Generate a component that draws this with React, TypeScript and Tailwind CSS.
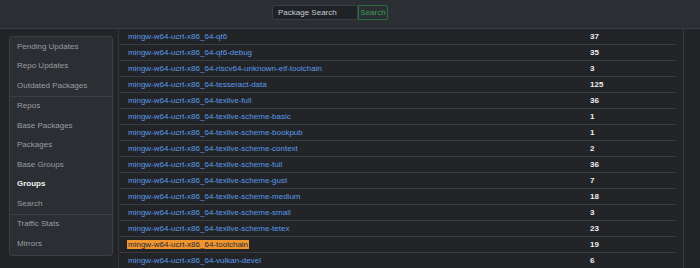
const groups = [
  ['Pending Updates', 'Repo Updates', 'Outdated Packages'],
  ['Repos', 'Base Packages', 'Packages', 'Base Groups', 'Groups', 'Search'],
  ['Traffic Stats', 'Mirrors'],
]

const rows: [string, number][] = [
  ['mingw-w64-ucrt-x86_64-qt6', 37],
  ['mingw-w64-ucrt-x86_64-qt6-debug', 35],
  ['mingw-w64-ucrt-x86_64-riscv64-unknown-elf-toolchain', 3],
  ['mingw-w64-ucrt-x86_64-tesseract-data', 125],
  ['mingw-w64-ucrt-x86_64-texlive-full', 36],
  ['mingw-w64-ucrt-x86_64-texlive-scheme-basic', 1],
  ['mingw-w64-ucrt-x86_64-texlive-scheme-bookpub', 1],
  ['mingw-w64-ucrt-x86_64-texlive-scheme-context', 2],
  ['mingw-w64-ucrt-x86_64-texlive-scheme-full', 36],
  ['mingw-w64-ucrt-x86_64-texlive-scheme-gust', 7],
  ['mingw-w64-ucrt-x86_64-texlive-scheme-medium', 18],
  ['mingw-w64-ucrt-x86_64-texlive-scheme-small', 3],
  ['mingw-w64-ucrt-x86_64-texlive-scheme-tetex', 23],
  ['mingw-w64-ucrt-x86_64-toolchain', 19],
  ['mingw-w64-ucrt-x86_64-vulkan-devel', 6],
]

export default function App() {
  return (
    <div className="w-[700px] h-[268px] overflow-hidden bg-[#222428] text-[8px] font-['Liberation_Sans',Arial,sans-serif]">
      <header className="h-[29px] bg-[#2b2e32] border-b border-[#3a3d42] flex justify-center items-start pt-[5px]">
        <div className="flex h-[15px] mr-[40px]">
          <div className="w-[86px] bg-[#1f2226] border border-[#3a3d42] rounded-l-[2px] text-[#c9cbce] pl-[5px] flex items-center">
            Package Search
          </div>
          <div className="w-[30px] border border-[#2b6e3c] rounded-r-[2px] text-[#3c9c54] flex items-center justify-center">
            Search
          </div>
        </div>
      </header>
      <div className="flex h-[239px]">
        <div className="w-[118px] shrink-0 pl-[9px] pt-[7px]">
          <nav className="w-[104px] h-[220px] bg-[#2b2e32] border border-[#3b3e43] rounded-[3px]">
            {groups.map((g, i) => (
              <div key={i} className={i > 0 ? 'border-t border-[#3b3e43]' : ''}>
                {g.map((item) => (
                  <div
                    key={item}
                    className={
                      'h-[19.5px] pl-[7px] flex items-center ' +
                      (item === 'Groups' ? 'text-[#f2f2f2] font-bold' : 'text-[#9a9ea3]')
                    }
                  >
                    {item}
                  </div>
                ))}
              </div>
            ))}
          </nav>
        </div>
        <div className="border-l border-[#34373c] pl-[1px] w-[558px] shrink-0">
          {rows.map(([name, n]) => (
            <div key={name} className="h-[16px] border-b border-[#383b40] flex items-center">
              <div className="w-[470px] pl-[8px]">
                {name === 'mingw-w64-ucrt-x86_64-toolchain' ? (
                  <span className="bg-[#f1962f] text-[#1e2a3b] px-[1px] ml-[-1px]">{name}</span>
                ) : (
                  <span className="text-[#5a9be9]">{name}</span>
                )}
              </div>
              <div className="text-[#eceef0] font-bold">{n}</div>
            </div>
          ))}
        </div>
        <div className="w-[7px] shrink-0" />
        <div className="border-l border-[#383b40] flex-1" />
      </div>
    </div>
  )
}
